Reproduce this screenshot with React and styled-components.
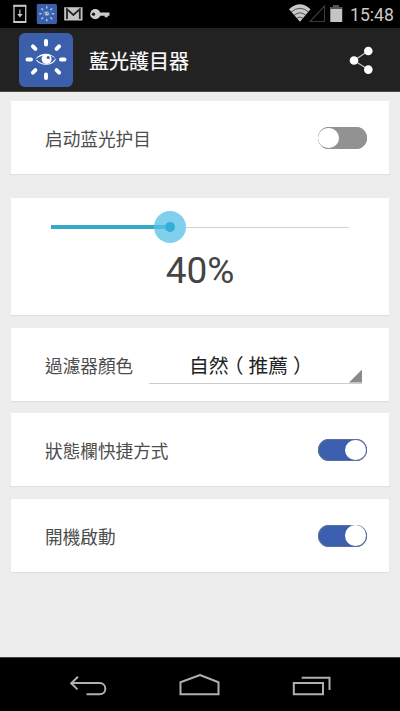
import React from "react";
import styled, { createGlobalStyle } from "styled-components";

const GlobalStyle = createGlobalStyle`
  * { box-sizing: border-box; }
  body {
    margin: 0;
    background: #ededed;
    font-family: Roboto, "Noto Sans CJK TC", sans-serif;
  }
`;

const Screen = styled.div`
  width: 400px;
  height: 711px;
  display: flex;
  flex-direction: column;
  overflow: hidden;
  background: #ededed;
`;

const StatusBar = styled.div`
  height: 28px;
  flex: none;
  display: flex;
  justify-content: space-between;
  background: #000;
`;

const StatusIcons = styled.svg`
  display: block;
  flex: none;
`;

const StatusRight = styled.div`
  display: flex;
  width: 114px;
`;

const Clock = styled.time`
  padding-left: 1px;
  color: #c9c9c9;
  font-size: 17.6px;
  line-height: 30px;
  white-space: nowrap;
`;

const AppBar = styled.header`
  height: 64px;
  flex: none;
  display: flex;
  align-items: center;
  padding: 0 24px 0 19px;
  background: #222;
  border-bottom: 1px solid #484848;
`;

const Title = styled.h1`
  flex: 1;
  margin: 0 0 0 16px;
  padding-top: 4px;
  color: #fff;
  font-size: 20px;
  font-weight: 400;
  line-height: 28px;
  -webkit-text-stroke: 0.2px #fff;
`;

const ShareButton = styled.button`
  width: 30px;
  height: 34px;
  padding: 0;
  border: 0;
  background: none;
  svg { display: block; }
`;

const Content = styled.main`
  flex: 1;
  padding: 9px 11px 0;
`;

const Card = styled.section`
  height: ${(p) => p.$height || 73}px;
  margin-bottom: ${(p) => p.$gap || 12.5}px;
  padding: 0 22.5px 0 34px;
  background: #fff;
  box-shadow: 0 1px 1px #dfdfdf;
`;

const RowCard = styled(Card)`
  display: flex;
  align-items: center;
  justify-content: space-between;
`;

const Label = styled.span`
  color: #4c4c4c;
  font-family: ${(p) => (p.$simplified ? '"Noto Sans CJK SC"' : '"Noto Sans CJK TC"')}, sans-serif;
  font-size: 17.65px;
  line-height: 26px;
  white-space: nowrap;
  padding-top: ${(p) => (p.$simplified ? 2 : 3)}px;
`;

const Track = styled.button`
  width: 49px;
  height: 22px;
  margin-top: 1px;
  display: flex;
  align-items: center;
  justify-content: ${(p) => (p.$on ? "flex-end" : "flex-start")};
  padding: 0 0.8px;
  border: 0;
  border-radius: 11px;
  background: ${(p) => (p.$on ? "#3b5fae" : "#929292")};
  box-shadow: inset 0 0 0 1px ${(p) => (p.$on ? "#5f6f95" : "#929292")};
`;

const Knob = styled.span`
  width: 20.4px;
  height: 20.4px;
  border-radius: 50%;
  background: #fff;
`;

const SliderCard = styled(Card)`
  display: flex;
  flex-direction: column;
  align-items: center;
  padding: 13px 40px 0;
`;

const Slider = styled.div`
  width: 298px;
  height: 32px;
  display: flex;
  align-items: center;
`;

const Filled = styled.div`
  width: 103px;
  height: 4px;
  background: #35a9cc;
`;

const Thumb = styled.div`
  width: 32px;
  height: 32px;
  flex: none;
  display: flex;
  align-items: center;
  border-radius: 50%;
  background: #80cfed;
`;

const ThumbLine = styled.div`
  width: 11px;
  height: 4px;
  background: #4fbbdf;
`;

const ThumbDot = styled.div`
  width: 10px;
  height: 10px;
  border-radius: 50%;
  background: #31afd8;
`;

const Rest = styled.div`
  flex: 1;
  height: 1px;
  background: #d2d2d2;
`;

const Percent = styled.div`
  margin-top: 4px;
  color: #444;
  font-size: 37px;
  line-height: 48px;
`;

const Select = styled.div`
  width: 213px;
  height: 39px;
  margin-right: 4.5px;
  display: flex;
  justify-content: flex-end;
  align-items: flex-end;
  border-bottom: 1px solid #ccc;
`;

const SelectText = styled.span`
  flex: 1;
  display: flex;
  padding-left: 40px;
  color: #222;
  font-family: "Noto Sans CJK TC", sans-serif;
  font-size: 19.8px;
  line-height: 36px;
  white-space: nowrap;
`;

const Paren = styled.span`
  width: 19.8px;
  text-align: center;
  font-feature-settings: "halt";
`;

const Corner = styled.i`
  width: 13px;
  height: 13px;
  flex: none;
  background: #8a8a8a;
  clip-path: polygon(100% 0, 100% 100%, 0 100%);
`;

const NavBar = styled.nav`
  height: 54px;
  flex: none;
  display: flex;
  justify-content: center;
  gap: 71px;
  padding-top: 16px;
  background: #000;
  border-top: 1px solid #444;
  svg { display: block; }
`;

function Logo({ size, tint = "#fff" }) {
  return (
    <svg width={size} height={size} viewBox="0 0 54 54">
      <rect width="54" height="54" rx="6" fill="#3c5fab" />
      <g stroke={tint} strokeWidth="4" strokeLinecap="round">
        {[0, 45, 90, 135, 180, 225, 270, 315].map((a) => (
          <path key={a} d="M27 8v3.5" transform={`rotate(${a} 27 26.5)`} />
        ))}
      </g>
      <path d="M17.5 27C22 32.8 32.5 32.8 36.5 26.2" fill="none" stroke={tint} strokeWidth="1.1" />
      <path d="M16 26.5C21 18.8 32.5 18.8 37 26.2C33.5 22.6 30 22 27 22.2S20 23.2 16 26.5Z" fill={tint} />
      <circle cx="27.6" cy="26" r="5" fill={tint} />
      <circle cx="29.2" cy="24.4" r="1.5" fill="#3c5fab" />
    </svg>
  );
}

function Switch({ on }) {
  return (
    <Track type="button" role="switch" aria-checked={!!on} $on={on}>
      <Knob />
    </Track>
  );
}

function NotificationIcons() {
  return (
    <StatusIcons width="120" height="28" viewBox="0 0 120 28">
      <rect x="14" y="5.7" width="11.7" height="16.5" fill="none" stroke="#c8c8c8" strokeWidth="1.3" />
      <path d="M13.5 5.8h12.7M13.5 22h12.7" stroke="#c8c8c8" strokeWidth="2" />
      <path d="M19.9 9.5v6" stroke="#c8c8c8" strokeWidth="1.2" />
      <path d="M17.2 14h5.4l-2.7 3.4z" fill="#c8c8c8" />
      <g transform="translate(36.5 3.7)"><Logo size={20.5} tint="#a9c5df" /></g>
      <path d="M64.2 7.2h18.3v13.3H64.2z" fill="#c4c4c4" />
      <path d="M67 19V9.2l6.4 5.8 6.4-5.8V19" fill="none" stroke="#222" strokeWidth="1.8" />
      <circle cx="95.3" cy="14.2" r="5.1" fill="#ccc" />
      <path d="M99 12.5h10.5v3.2h-1.8v1.6h-3v-1.6H99z" fill="#ccc" />
      <circle cx="93.5" cy="14.2" r="1.6" fill="#111" />
    </StatusIcons>
  );
}

function SignalIcons() {
  return (
    <StatusIcons width="63" height="28" viewBox="0 0 63 28">
      <path d="M3 9.3Q14-.8 24.5 9.3L14 21.8z" fill="#c8c8c8" />
      <path d="M5 12.2Q14 4.4 22.8 12.2M8 15.3Q14 10.4 19.9 15.3M10.8 18.3Q14 15.7 17 18.3" fill="none" stroke="#333" strokeWidth="0.8" />
      <path d="M24 21.5h14.5V6z" fill="none" stroke="#3a3a3a" strokeWidth="1.1" />
      <path d="M44.3 7h3.2V5h5.5v2h3.2v15H44.3z" fill="#c4c4c4" />
      <path d="M44.3 7h3.2V5h5.5v2h3.2v2H44.3z" fill="#555" />
    </StatusIcons>
  );
}

export default function App() {
  return (
    <>
      <GlobalStyle />
      <Screen>
        <StatusBar>
          <NotificationIcons />
          <StatusRight>
            <SignalIcons />
            <Clock>15:48</Clock>
          </StatusRight>
        </StatusBar>
        <AppBar>
          <Logo size={54} />
          <Title>藍光護目器</Title>
          <ShareButton type="button" aria-label="分享">
            <svg width="30" height="34" viewBox="0 0 30 34">
              <path d="M22.3 8L8 17.5l14.3 9" fill="none" stroke="#bbb" strokeWidth="1.4" />
              <g fill="#fff">
                <circle cx="22.3" cy="8" r="4.3" />
                <circle cx="8" cy="17.5" r="4.3" />
                <circle cx="22.3" cy="26.6" r="4.3" />
              </g>
            </svg>
          </ShareButton>
        </AppBar>
        <Content>
          <RowCard $gap={24}>
            <Label $simplified lang="zh-Hans">启动蓝光护目</Label>
            <Switch />
          </RowCard>
          <SliderCard $height={117}>
            <Slider>
              <Filled />
              <Thumb>
                <ThumbLine />
                <ThumbDot />
              </Thumb>
              <Rest />
            </Slider>
            <Percent>40%</Percent>
          </SliderCard>
          <RowCard>
            <Label>過濾器顏色</Label>
            <Select>
              <SelectText>
                自然<Paren>（</Paren>推薦<Paren>）</Paren>
              </SelectText>
              <Corner />
            </Select>
          </RowCard>
          <RowCard>
            <Label>狀態欄快捷方式</Label>
            <Switch on />
          </RowCard>
          <RowCard>
            <Label>開機啟動</Label>
            <Switch on />
          </RowCard>
        </Content>
        <NavBar>
          <svg width="42" height="24" viewBox="0 0 42 24" fill="none" stroke="#b0b0b0" strokeWidth="2">
            <path d="M12 2.8L5.2 9.2l6.3 6.2M5.5 9.1H33.5c7.8 0 7.8 11.1 0 11.1H20.5" />
          </svg>
          <svg width="42" height="24" viewBox="0 0 42 24" fill="none" stroke="#b0b0b0" strokeWidth="2">
            <path d="M1.5 20.3V8.2L21 1l18.5 7.2v12.1z" />
          </svg>
          <svg width="42" height="24" viewBox="0 0 42 24" fill="none" stroke="#b0b0b0" strokeWidth="2">
            <path d="M1.8 9H31v11.3H1.8zM9.7 3.8H37.5V16" />
          </svg>
        </NavBar>
      </Screen>
    </>
  );
}
